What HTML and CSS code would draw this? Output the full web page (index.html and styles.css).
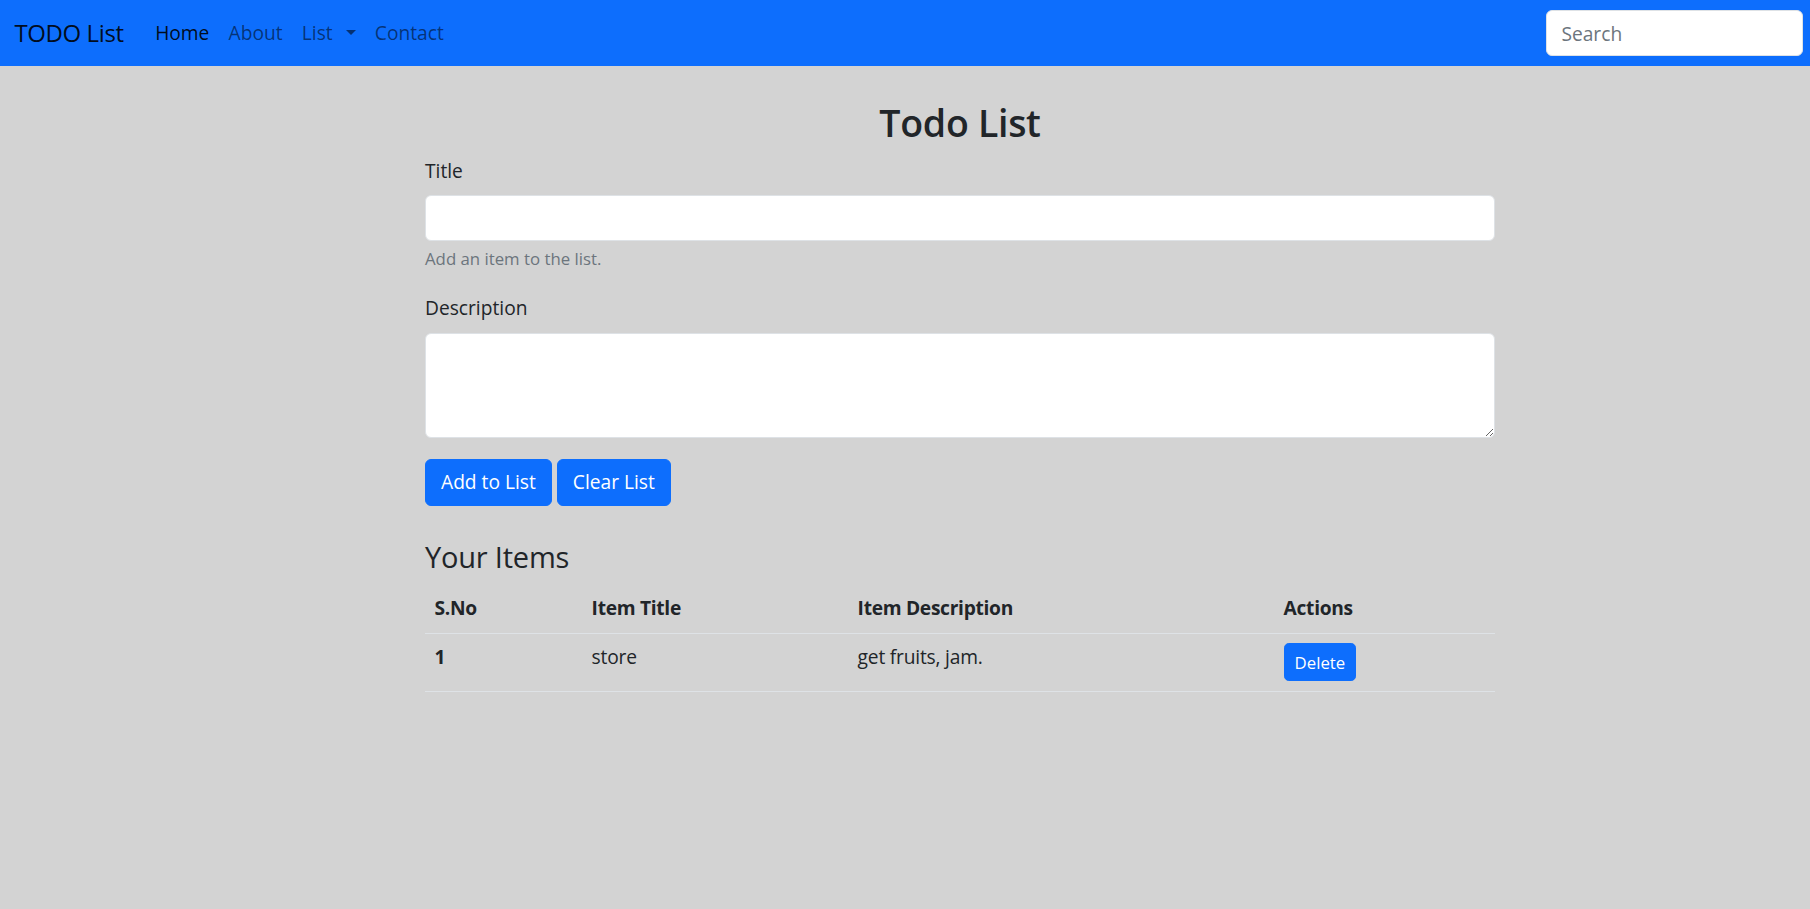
FILE: index.html
```html
<!DOCTYPE html>
<html lang="en">
<head>
<meta charset="utf-8">
<title>TODO List</title>
<link rel="stylesheet" href="styles.css">
</head>
<body>
<nav class="navbar">
  <a class="brand" href="#">TODO List</a>
  <ul class="nav-links">
    <li><a class="nav-link active" href="#">Home</a></li>
    <li><a class="nav-link" href="#">About</a></li>
    <li><a class="nav-link dropdown-toggle" href="#">List</a></li>
    <li><a class="nav-link" href="#">Contact</a></li>
  </ul>
  <form class="search-form">
    <input class="search-input" type="search" placeholder="Search">
  </form>
</nav>

<main class="container">
  <h1 class="page-title">Todo List</h1>
  <div class="field">
    <label class="form-label" for="title">Title</label>
    <input class="form-control" id="title" type="text">
    <div class="form-text">Add an item to the list.</div>
  </div>
  <div class="field field-desc">
    <label class="form-label" for="description">Description</label>
    <textarea class="form-control textarea" id="description" rows="3"></textarea>
  </div>
  <div class="actions">
    <button class="btn" type="button">Add to List</button>
    <button class="btn" type="button">Clear List</button>
  </div>

  <h3 class="section-title">Your Items</h3>
  <table class="table">
    <colgroup>
      <col class="c1"><col class="c2"><col class="c3"><col class="c4">
    </colgroup>
    <thead>
      <tr>
        <th>S.No</th>
        <th>Item Title</th>
        <th>Item Description</th>
        <th>Actions</th>
      </tr>
    </thead>
    <tbody>
      <tr>
        <th>1</th>
        <td>store</td>
        <td>get fruits, jam.</td>
        <td><button class="btn btn-sm" type="button">Delete</button></td>
      </tr>
    </tbody>
  </table>
</main>
</body>
</html>
```

FILE: styles.css
```css
* { box-sizing: border-box; }

html, body {
  margin: 0;
  overflow: hidden;
}

body {
  background: #d3d3d3;
  color: #212529;
  font-family: "Open Sans", "Noto Sans", sans-serif;
  font-size: 19.2px;
  line-height: 1.5;
  width: 1810px;
  height: 909px;
}

/* Navbar */
.navbar {
  display: flex;
  align-items: center;
  height: 66px;
  padding: 9.6px 7px 9.6px 14.4px;
  background: #0d6efd;
}

.brand {
  font-size: 24px;
  padding: 6px 0;
  margin-right: 22px;
  color: rgba(0, 0, 0, 0.9);
  text-decoration: none;
  letter-spacing: -0.4px;
}

.nav-links {
  display: flex;
  list-style: none;
  margin: 0;
  padding: 0;
}

.nav-link {
  display: block;
  padding: 9.6px 9.6px;
  color: rgba(0, 0, 0, 0.55);
  text-decoration: none;
}

.nav-link.active { color: rgba(0, 0, 0, 0.9); }

.dropdown-toggle::after {
  content: "";
  display: inline-block;
  margin-left: 13px;
  vertical-align: 0.255em;
  border-top: 0.3em solid;
  border-left: 0.3em solid transparent;
  border-right: 0.3em solid transparent;
}

.search-form {
  margin-left: auto;
  display: flex;
}

.search-input {
  width: 257px;
  height: 46px;
  padding: 7.2px 14.4px;
  font: inherit;
  font-size: 19.2px;
  color: #212529;
  background: #fff;
  border: 1px solid #dee2e6;
  border-radius: 6px;
  outline: none;
}

.search-input::placeholder { color: #6c757d; }

/* Main */
.container {
  width: 1070px;
  margin-left: 425px;
  padding-top: 34px;
}

.page-title {
  text-align: center;
  font-size: 37.5px;
  font-weight: 600;
  line-height: 1.2;
  margin: 0 0 12px;
  letter-spacing: -0.3px;
}

.field { margin-bottom: 23px; }

.form-label {
  display: inline-block;
  margin-bottom: 9.6px;
}

.form-control {
  display: block;
  width: 100%;
  height: 46px;
  padding: 7.2px 14.4px;
  font: inherit;
  background: #fff;
  border: 1px solid #dee2e6;
  border-radius: 6px;
  outline: none;
}

.textarea {
  height: 105px;
  resize: vertical;
}

.field-desc { margin-bottom: 21px; }

.form-text {
  margin-top: 4.8px;
  font-size: 16.8px;
  color: #6c757d;
}

.actions {
  display: flex;
  gap: 5px;
}

.btn {
  display: inline-block;
  height: 47px;
  padding: 7.2px 15px;
  font: inherit;
  font-size: 19.2px;
  color: #fff;
  background: #0d6efd;
  border: 1px solid #0d6efd;
  border-radius: 6px;
  cursor: pointer;
}

.btn-sm {
  height: 38px;
  padding: 4.8px 10px;
  font-size: 16.8px;
  border-radius: 4.8px;
}

.section-title {
  font-size: 29px;
  font-weight: 500;
  line-height: 1.2;
  margin: 34px 0 10px;
  letter-spacing: -0.2px;
}

/* Table */
.table {
  width: 100%;
  border-collapse: collapse;
  table-layout: fixed;
}

.c1 { width: 157px; }
.c2 { width: 266px; }
.c3 { width: 426px; }
.c4 { width: 221px; }

.table th,
.table td {
  padding: 9.6px;
  text-align: left;
  vertical-align: top;
  border-bottom: 1px solid #dee2e6;
}

.table th { font-weight: 700; letter-spacing: -0.3px; }
.table td { font-weight: 400; letter-spacing: -0.2px; }
```
